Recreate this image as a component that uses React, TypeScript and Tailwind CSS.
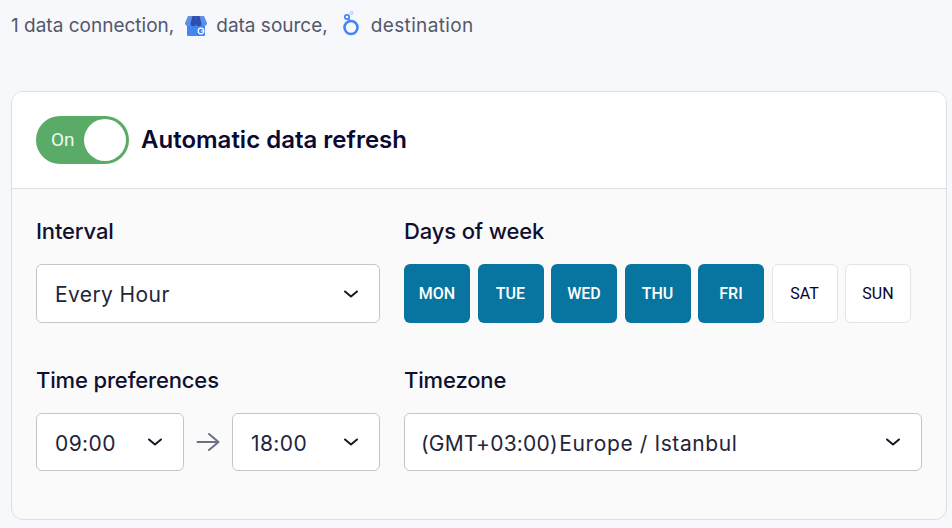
import React from "react";

const Chevron = () => (
  <svg width="16" height="16" viewBox="0 0 16 16" fill="none" className="shrink-0">
    <path d="M2 5.500 8 10.500l6-5" stroke="#16182a" strokeWidth="2" strokeLinecap="round" strokeLinejoin="round" />
  </svg>
);

const Select = ({ children, className, textClass = "pt-[2px]" }: { children: React.ReactNode; className: string; textClass?: string }) => (
  <div className={"flex items-center justify-between rounded-[6px] border border-[#c4c5c9] bg-white pl-[18px] pr-[20px] text-[21px] text-[#23253a] tracking-[0.4px] " + className}>
    <span className={"whitespace-nowrap " + textClass}>{children}</span>
    <Chevron />
  </div>
);

const Label = ({ children }: { children: React.ReactNode }) => (
  <div className="text-[22px] leading-[30px] font-medium text-[#0f1030] tracking-[-0.15px]">{children}</div>
);

const days: [string, boolean][] = [
  ["MON", true], ["TUE", true], ["WED", true], ["THU", true], ["FRI", true], ["SAT", false], ["SUN", false],
];

const GbpIcon = () => (
  <svg width="22" height="20" viewBox="0 0 22 20">
    <path d="M2 8h18v11a1 1 0 0 1-1 1H3a1 1 0 0 1-1-1z" fill="#4285f4" />
    <path d="M3 0h16l3 7a2.750 2.750 0 0 1-5.500.5 2.750 2.750 0 0 1-5.500 0 2.750 2.750 0 0 1-5.500 0A2.750 2.750 0 0 1 0 7z" fill="#5c8fe8" />
    <path d="M7.500 0h3.300L11 7.500a2.750 2.750 0 0 1-5.500 0zM14.500 0h-3.300L11 7.500a2.750 2.750 0 0 0 5.500 0z" fill="#2f4ea8" />
    <circle cx="16" cy="15" r="2.800" fill="none" stroke="#fff" strokeWidth="1.200" />
    <path d="M16 15h3" stroke="#fff" strokeWidth="1.100" />
  </svg>
);

const LookerIcon = () => (
  <svg width="22" height="30" viewBox="0 0 22 30" fill="none">
    <circle cx="11" cy="16.500" r="6.500" stroke="#4285f4" strokeWidth="2.600" />
    <circle cx="7" cy="6" r="2.200" stroke="#4285f4" strokeWidth="1.700" />
    <circle cx="11.500" cy="2" r="1.400" stroke="#b6cdf6" strokeWidth="1.100" />
    <path d="M8.500 8l2 2.500" stroke="#4285f4" strokeWidth="1.700" />
  </svg>
);

const rowCol = "flex flex-col gap-[18px]";

export default function App() {
  return (
    <div className="w-[952px] h-[528px] overflow-hidden bg-[#f6f8fc] font-['Inter',sans-serif]">
      <div className="h-[91px] pl-[11px] pt-[14px]">
        <div className="flex items-center h-[24px] text-[19px] text-[#55576a]">
          <span>1 data connection,</span>
          <span className="ml-[11px] mr-[9px] flex"><GbpIcon /></span>
          <span>data source,</span>
          <span className="ml-[12px] mr-[9px] flex"><LookerIcon /></span>
          <span className="tracking-[0.35px]">destination</span>
        </div>
      </div>
      <div className="ml-[11px] w-[936px] h-[429px] rounded-[12px] border border-[#dcdee6] bg-[#fafafb] overflow-hidden">
        <div className="h-[97px] bg-white border-b border-[#dcdee6] flex items-center pl-[24px] gap-[12px]">
          <div className="w-[93px] h-[48px] rounded-full bg-[#5aab67] relative flex items-center pl-[15px] text-[19px] text-[#eef8f0] font-['Roboto',sans-serif]">
            On
            <div className="absolute right-[3px] top-[3px] w-[42px] h-[42px] rounded-full bg-white" />
          </div>
          <div className="text-[24px] font-semibold text-[#0a0a33]">Automatic data refresh</div>
        </div>
        <div className="pl-[24px] pr-[24px] pt-[27px] grid grid-cols-[344px_518px] gap-x-[24px]">
          <div className={rowCol}>
            <Label>Interval</Label>
            <Select className="w-[344px] h-[59px]">Every Hour</Select>
          </div>
          <div className={rowCol}>
            <Label>Days of week</Label>
            <div className="flex gap-[7.5px] h-[59px]">
              {days.map(([d, on]) => (
                <div
                  key={d}
                  className={
                    on
                      ? "w-[66px] pt-[1px] rounded-[6px] bg-[#07759f] text-white flex items-center justify-center text-[16px] font-medium font-['Roboto',sans-serif]"
                      : "w-[66px] pt-[1px] rounded-[6px] bg-white border border-[#e2e4ea] text-[#05052b] flex items-center justify-center text-[16px] font-['Roboto',sans-serif]"
                  }
                >
                  {d}
                </div>
              ))}
            </div>
          </div>
          <div className={rowCol + " mt-[42px]"}>
            <Label>Time preferences</Label>
            <div className="flex items-center justify-between">
              <Select className="w-[148px] h-[58px]" textClass="pt-[3px]">09:00</Select>
              <svg width="24" height="20" viewBox="0 0 24 20" fill="none" className="mr-[1px]">
                <path d="M1.500 10h21M13 2l9.500 8-9.500 8" stroke="#6d7080" strokeWidth="2" strokeLinecap="round" strokeLinejoin="round" />
              </svg>
              <Select className="w-[148px] h-[58px]" textClass="pt-[3px]">18:00</Select>
            </div>
          </div>
          <div className={rowCol + " mt-[42px]"}>
            <Label>Timezone</Label>
            <Select className="w-[518px] h-[58px] !pl-[16px]" textClass="pt-[3px]"><span className="tracking-[0.2px]">(GMT+03:00)</span><span className="ml-[-5px] tracking-[0.6px]"> Europe / Istanbul</span></Select>
          </div>
        </div>
      </div>
    </div>
  );
}
